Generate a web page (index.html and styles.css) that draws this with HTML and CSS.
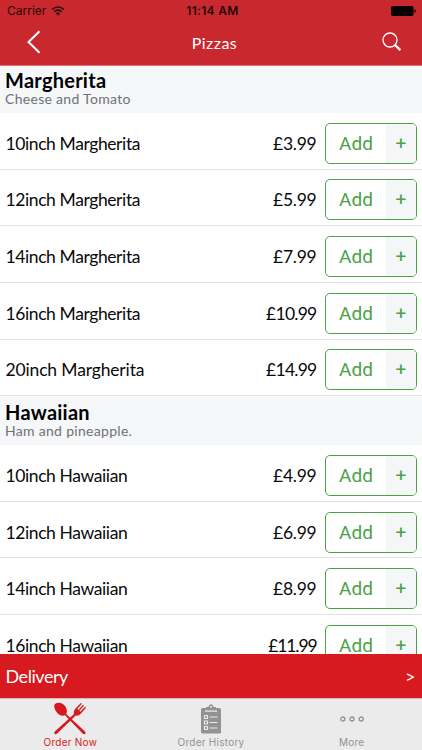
FILE: index.html
```html
<!DOCTYPE html>
<html lang="en">
<head>
<meta charset="utf-8">
<title>Pizzas</title>
<link rel="stylesheet" href="styles.css">
</head>
<body>
<div class="app">
  <header class="top">
    <div class="status">
      <span class="carrier">Carrier <svg width="14" height="10" viewBox="0 0 14 10" fill="none" stroke="currentColor" stroke-width="1.5"><path d="M1 3.5Q7-1.5 13 3.5M3.2 5.8Q7 2.4 10.8 5.8"/><path d="M4.8 7.3Q7 5.4 9.2 7.3L7 9.6Z" fill="currentColor" stroke="none"/></svg></span>
      <span class="clock">11:14 AM</span>
      <svg class="battery" width="25" height="10" viewBox="0 0 25 10"><rect width="22.5" height="10" rx="1.8"/><path d="M23.3 3.2q1.5.3 1.5 1.8t-1.5 1.8z"/></svg>
    </div>
    <nav class="nav">
      <svg class="back" width="14" height="24" viewBox="0 0 14 24"><path d="M12.5 1.2L1.5 12L12.5 22.8"/></svg>
      <h1>Pizzas</h1>
      <svg class="search" width="20" height="20" viewBox="0 0 20 20"><circle cx="8" cy="8" r="7"/><path class="handle" d="M13 13L18.4 18.2"/></svg>
    </nav>
  </header>
  <main class="menu">
    <section>
      <div class="heading"><h2>Margherita</h2><p>Cheese and Tomato</p></div>
      <div class="row"><span class="name">10inch Margherita</span><span class="price">£3.99</span><button><span>Add</span><i>+</i></button></div>
      <div class="row"><span class="name">12inch Margherita</span><span class="price">£5.99</span><button><span>Add</span><i>+</i></button></div>
      <div class="row"><span class="name">14inch Margherita</span><span class="price">£7.99</span><button><span>Add</span><i>+</i></button></div>
      <div class="row"><span class="name">16inch Margherita</span><span class="price long">£10.99</span><button><span>Add</span><i>+</i></button></div>
      <div class="row"><span class="name wide">20inch Margherita</span><span class="price long">£14.99</span><button><span>Add</span><i>+</i></button></div>
    </section>
    <section>
      <div class="heading ham"><h2>Hawaiian</h2><p>Ham and pineapple.</p></div>
      <div class="row"><span class="name">10inch Hawaiian</span><span class="price">£4.99</span><button><span>Add</span><i>+</i></button></div>
      <div class="row"><span class="name">12inch Hawaiian</span><span class="price">£6.99</span><button><span>Add</span><i>+</i></button></div>
      <div class="row"><span class="name">14inch Hawaiian</span><span class="price">£8.99</span><button><span>Add</span><i>+</i></button></div>
      <div class="row"><span class="name">16inch Hawaiian</span><span class="price longest">£11.99</span><button><span>Add</span><i>+</i></button></div>
    </section>
  </main>
  <div class="delivery"><span>Delivery</span><span class="go">&gt;</span></div>
  <footer class="tabs">
    <div class="tab active">
      <svg width="34" height="33" viewBox="0 0 34 33"><path d="M2 2C5-.5 11 1 13 5.5C14.3 8.5 14 10.5 13.2 12L32 29.5Q33.3 31 32 32Q30.8 32.8 29.6 31.5L12 13.3C9 14.5 5.5 13 3.5 10C1.5 7 .3 3.8 2 2Z"/><path d="M1.8 29.5L20.8 12.3Q20 9 22.3 6.8L27.8 1L28.8 1.8L24.4 7L25.4 7.9L30 2.8L31 3.7L26.4 8.8L27.3 9.7L32 4.7L33 5.7L28 11.5Q25.5 14.3 22.5 13.7L4.2 31.5Q3 32.8 1.8 32Q.6 31 1.8 29.5Z"/></svg>
      <span>Order Now</span>
    </div>
    <div class="tab history">
      <svg width="20" height="30" viewBox="0 0 20 30"><path d="M1.5 4H5V3H7.5Q7.8.2 10 .2T12.5 3H15V4H18.5Q20 4 20 5.5V28Q20 29.5 18.5 29.5H1.5Q0 29.5 0 28V5.5Q0 4 1.5 4Z"/><circle class="cut" cx="10" cy="2.8" r="1"/><path class="lines" d="M4 7.2H16M8.5 13H16.5M8.5 18.5H16.5M8.5 24H16.5"/><path class="checks" d="M3.5 11.5h3v3h-3zM3.5 17h3v3h-3zM3.5 22.5h3v3h-3z"/></svg>
      <span>Order History</span>
    </div>
    <div class="tab more">
      <svg width="24" height="6" viewBox="0 0 24 6"><circle cx="2.8" cy="3" r="2"/><circle cx="12" cy="3" r="2"/><circle cx="21.2" cy="3" r="2"/></svg>
      <span>More</span>
    </div>
  </footer>
</div>
</body>
</html>
```
FILE: styles.css
```css
* { box-sizing: border-box; }
body { margin: 0; font-family: Lato, "Liberation Sans", sans-serif; color: #090909; }
h1, h2, p { margin: 0; }
svg { display: block; flex: none; }
.app { width: 422px; height: 750px; display: flex; flex-direction: column; overflow: hidden; background: #fff; }
.top { flex: none; height: 66px; background: #c9282e; border-bottom: 1px solid #db777d; }
.status { display: grid; grid-template-columns: 1fr auto 1fr; align-items: center; height: 22px; padding: 0 6px 0 7px; font: 12px/22px Inter, sans-serif; color: #24090a; }
.carrier { display: flex; align-items: center; gap: 5px; }
.clock { font-weight: 600; letter-spacing: .3px; margin-left: 2px; }
.battery { justify-self: end; fill: #080203; }
.nav { display: grid; grid-template-columns: 1fr auto 1fr; align-items: center; height: 43px; padding: 0 20px 0 27px; color: #fff; }
.nav h1 { font-size: 16px; line-height: 20px; font-weight: 400; letter-spacing: .45px; margin: -2px 0 0 0; }
.nav svg { fill: none; stroke: #fff; }
.back { stroke-width: 2; margin-top: -3px; }
.search { justify-self: end; stroke-width: 1.3; margin-top: -3px; }
.search .handle { stroke-width: 2.4; }
.menu { flex: 1; min-height: 0; overflow: hidden; }
.heading { height: 47px; padding: 3px 5px 0; background: #f6f7f9; }
.heading h2 { font-size: 20px; line-height: 23px; letter-spacing: .25px; color: #000; }
.heading p { font-size: 14px; line-height: 14px; color: #707173; letter-spacing: .3px; }
.heading.ham { height: 49px; padding-top: 5px; }
.row { height: 56.65px; display: flex; align-items: center; padding: 5px 5px 0 5.5px; border-bottom: 1px solid #e1e2e4; font-size: 17.5px; }
.name { flex: 1; letter-spacing: -.4px; }
.name.wide { letter-spacing: -.15px; }
.price { margin-right: 8.5px; letter-spacing: -.25px; }
.price.long { letter-spacing: -.75px; }
.price.longest { letter-spacing: -1.1px; }
button { display: flex; width: 92px; height: 41px; padding: 0; border: 1px solid #4ca147; border-radius: 5px; overflow: hidden; background: #fff; color: #4ca147; font: 400 19px/40px Roboto, sans-serif; }
button span { width: 60px; }
button i { flex: 1; font-style: normal; background: #f5f6f8; }
.delivery { flex: none; height: 44px; padding: 0 7px 0 5.5px; display: flex; justify-content: space-between; align-items: center; background: #d71920; color: #fff; font-size: 18px; letter-spacing: -.45px; }
.tabs { flex: none; height: 52px; display: flex; justify-content: space-between; border-top: 1px solid #d9b8ba; background: #ebebeb; color: #929292; font: 10px/13px Inter, sans-serif; }
.tab { width: 140.67px; display: flex; flex-direction: column; align-items: center; justify-content: flex-end; padding-bottom: 1px; fill: currentColor; letter-spacing: .25px; }
.active { color: #d71920; }
.tab svg { margin-bottom: 1px; }
.history svg { margin-bottom: 2px; }
.more svg { margin-bottom: 14px; fill: none; stroke: currentColor; stroke-width: 1.3; }
.cut { fill: #ebebeb; }
.lines, .checks { fill: none; stroke: #ebebeb; stroke-width: 1.2; }
```
